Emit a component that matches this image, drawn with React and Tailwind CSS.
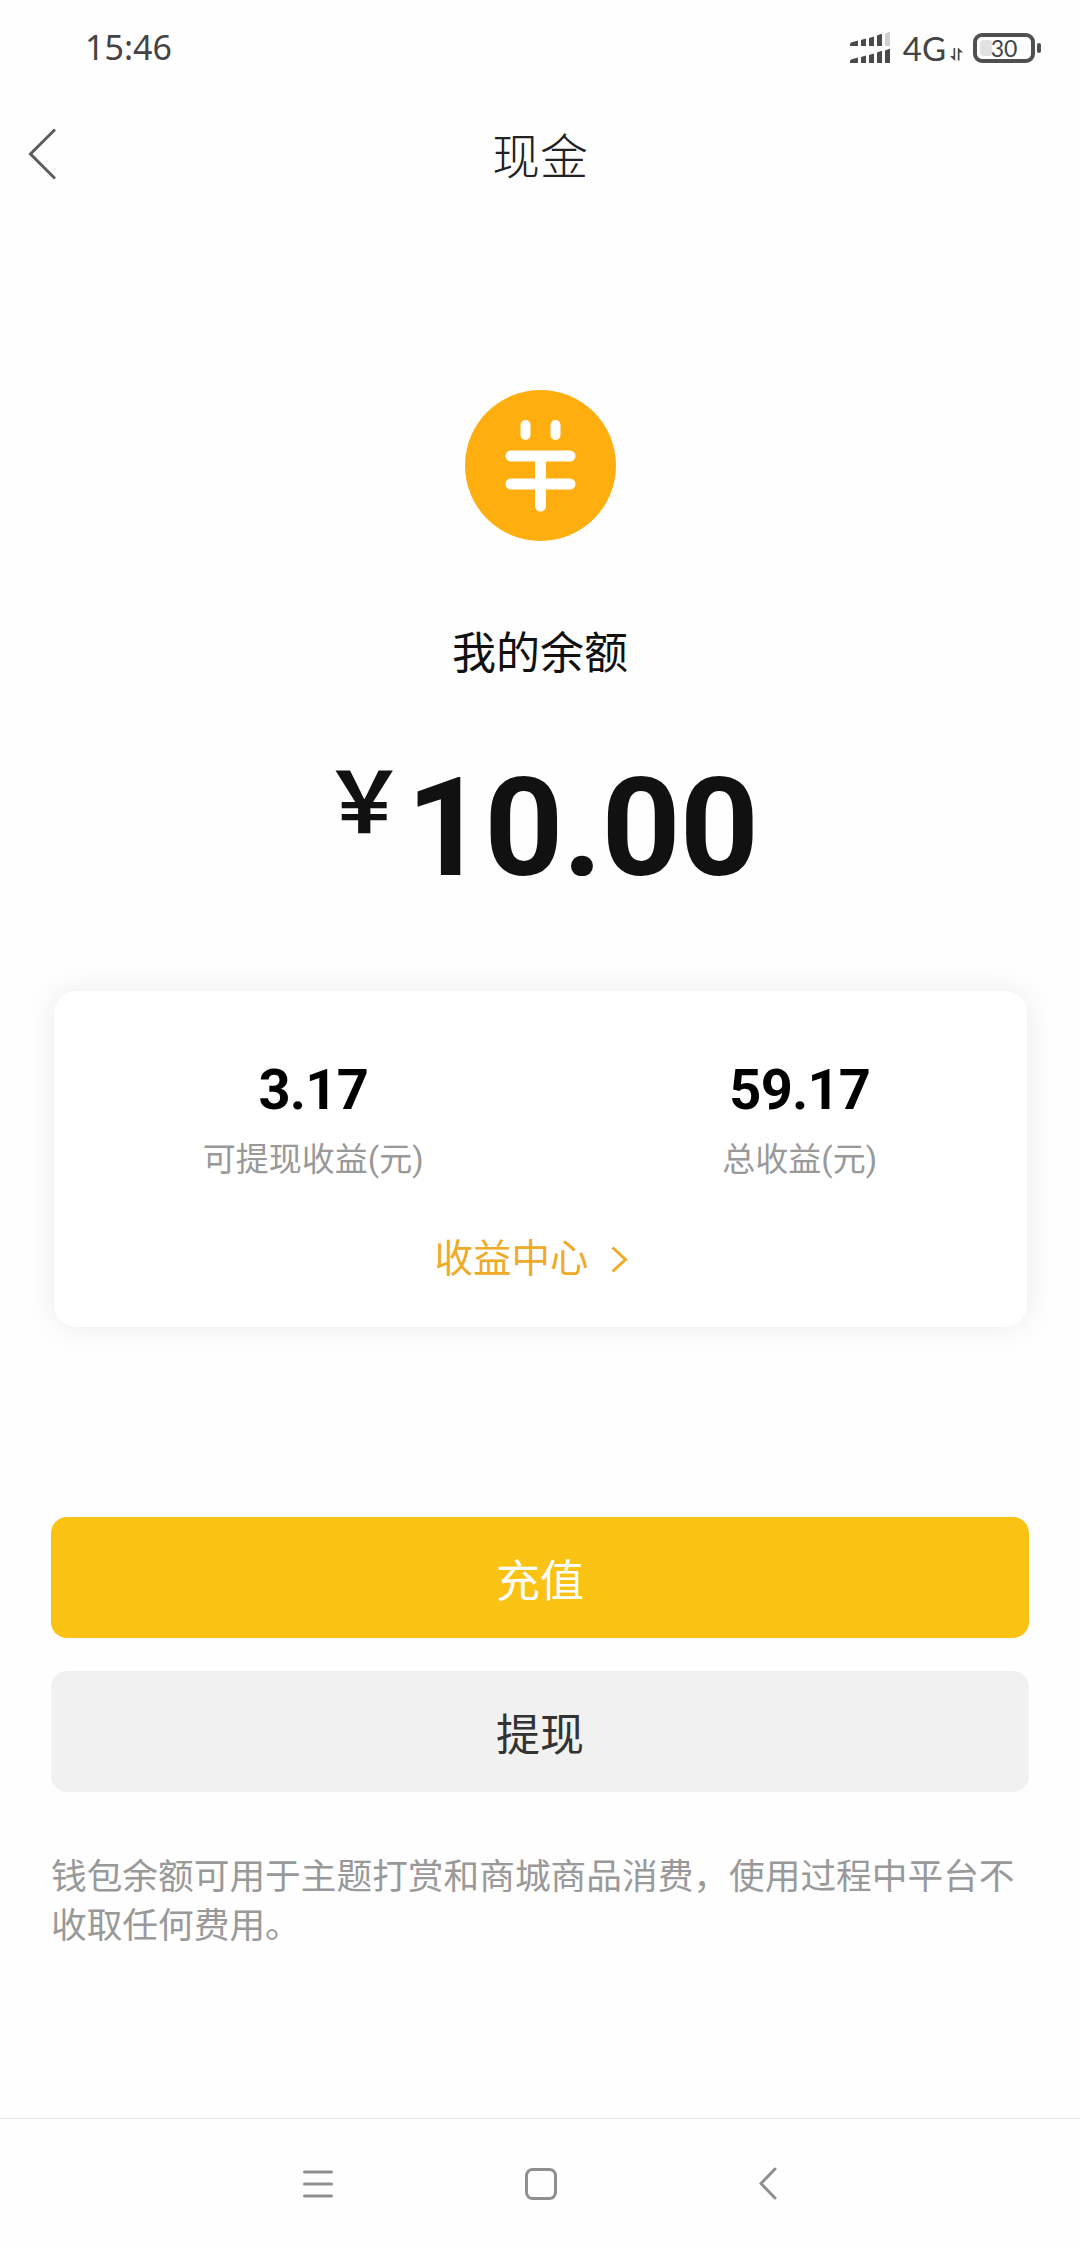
const stats = [
  { value: "3.17", label: "可提现收益(元)" },
  { value: "59.17", label: "总收益(元)" },
];

const SignalIcon = () => (
  <svg width="40" height="32" viewBox="0 0 40 32" fill="#4a4a4a">
    <path d="M0 12l1-1.600L8 8.500V14H0z" />
    <path d="M11 8l5-1.500V14h-5z" />
    <path d="M19 6l5-1.500V14h-5z" />
    <path d="M27 3.500l4-1.500h1v12h-5z" />
    <path d="M35 1.500l4-1.500h1v14h-5z" fill="#cfcfcf" />
    <path d="M0 29l1-1.600L8 25.500V31H0z" />
    <path d="M11 25l5-1.500V31h-5z" />
    <path d="M19 23l5-1.500V31h-5z" />
    <path d="M27 20.500l4-1.500h1v12h-5z" />
    <path d="M35 18.500l4-1.500h1v14h-5z" />
  </svg>
);

const DataIcon = () => (
  <svg width="13" height="13" viewBox="0 0 13 13" fill="#4a4a4a">
    <path d="M3.500 0H5.200V12.500H4.500L0 8H3.500z" />
    <path d="M7.800 0H8.500L13 4.500H9.500V12.500H7.800z" />
  </svg>
);

const Battery = () => (
  <div className="flex items-center gap-0.5">
    <div className="relative flex h-[30px] w-[62px] items-center justify-center rounded-[9px] border-4 border-[#505050]">
      <div className="absolute top-[3px] left-[3px] h-4 w-3 rounded-[3px] bg-[#e2e2e2]" />
      <span className="relative font-['Lato','Liberation_Sans',sans-serif] text-[23px] leading-none text-[#444]">30</span>
    </div>
    <div className="h-2.5 w-1 rounded-sm bg-[#505050]" />
  </div>
);

const StatusBar = () => (
  <div className="flex h-24 items-center justify-between pr-[39px] pl-[85px] text-[#444]">
    <span className="pb-0.5 font-['Noto_Sans',sans-serif] text-[34px] leading-none">15:46</span>
    <div className="flex items-center">
      <SignalIcon />
      <span className="ml-[13px] font-['Lato','Liberation_Sans',sans-serif] text-[33px] leading-none">4G</span>
      <div className="mt-3 mr-2.5 ml-1">
        <DataIcon />
      </div>
      <Battery />
    </div>
  </div>
);

const Header = () => (
  <div className="grid h-[116px] grid-cols-3 items-center">
    <button className="ml-7 w-fit">
      <svg width="28" height="52" viewBox="0 0 28 52" fill="none" stroke="#5c5c5c" strokeWidth="3">
        <path d="M27 1.500L2.500 26L27 50.500" />
      </svg>
    </button>
    <h1 className="pt-[7px] text-center text-[48px] leading-none font-light text-[#222]">现金</h1>
  </div>
);

const CoinIcon = () => (
  <svg width="151" height="151" viewBox="0 0 151 151" fill="none" stroke="#fff" strokeLinecap="round">
    <circle cx="75.500" cy="75.500" r="75.500" fill="#ffae10" stroke="none" />
    <path d="M60.500 35v10M90.500 35v10" strokeWidth="10" />
    <path d="M46 66h59M46 94h59M75.500 66v50" strokeWidth="11" />
  </svg>
);

const Balance = () => (
  <div className="flex flex-col items-center pt-[178px] text-[#111]">
    <CoinIcon />
    <p className="mt-[88px] text-[44px] leading-[50px]">我的余额</p>
    <div className="mt-20 flex items-start leading-none font-bold">
      <span className="-mt-1 font-['Noto_Sans_CJK_SC',sans-serif] text-[84px]">￥</span>
      <span className="text-[138px] tracking-[-1px]">10.00</span>
    </div>
  </div>
);

const IncomeCard = () => (
  <div className="mx-[54px] mt-[94px] h-[336px] w-[973px] rounded-[22px] bg-white pt-[69px] shadow-[0_0_32px_rgba(0,0,0,0.08)]">
    <div className="grid grid-cols-2">
      {stats.map((item) => (
        <div key={item.label} className="flex flex-col items-center pl-8">
          <span className="text-[56px] leading-[60px] font-bold tracking-[-0.8px] text-black">{item.value}</span>
          <span className="mt-5 text-[33px] leading-[40px] text-[#999]">{item.label}</span>
        </div>
      ))}
    </div>
    <button className="mx-auto mt-[54px] flex items-center gap-[22px] pr-[19px] text-[38.500px] leading-[50px] text-[#efab27]">
      收益中心
      <svg width="17" height="27" viewBox="0 0 17 27" fill="none" stroke="currentColor" strokeWidth="3">
        <path d="M1.500 1.500L14.500 13.500L1.500 25.500" />
      </svg>
    </button>
  </div>
);

const NavBar = () => (
  <div className="mt-auto flex h-[130px] items-center justify-center border-t border-[#e3e3e3] text-[#8f8f8f]">
    <svg width="30" height="28" viewBox="0 0 30 28" stroke="currentColor" strokeWidth="3" strokeLinecap="round">
      <path d="M1.500 2h27M1.500 14h27M1.500 26h27" />
    </svg>
    <svg className="mr-[202px] ml-48" width="32" height="32" viewBox="0 0 32 32" fill="none" stroke="currentColor" strokeWidth="3">
      <rect x="1.500" y="1.500" width="29" height="29" rx="6" />
    </svg>
    <svg width="18" height="33" viewBox="0 0 18 33" fill="none" stroke="currentColor" strokeWidth="3" strokeLinecap="round">
      <path d="M16 2L2 16.500L16 31" />
    </svg>
  </div>
);

export default function App() {
  return (
    <div className="flex h-[2248px] w-[1080px] flex-col bg-[#fefefe] font-['Roboto','Noto_Sans_CJK_SC',sans-serif]">
      <StatusBar />
      <Header />
      <Balance />
      <IncomeCard />
      <div className="mx-[51px] mt-[190px] flex flex-col gap-[33px] text-[44px]">
        <button className="h-[121px] rounded-2xl bg-[#fac212] pt-2 text-white">充值</button>
        <button className="h-[121px] rounded-2xl bg-[#f1f1f1] pt-2 text-[#333]">提现</button>
      </div>
      <p className="mx-[51px] mt-[61px] text-[35.700px] leading-[49px] text-[#999]">
        钱包余额可用于主题打赏和商城商品消费，使用过程中平台不收取任何费用。
      </p>
      <NavBar />
    </div>
  );
}
